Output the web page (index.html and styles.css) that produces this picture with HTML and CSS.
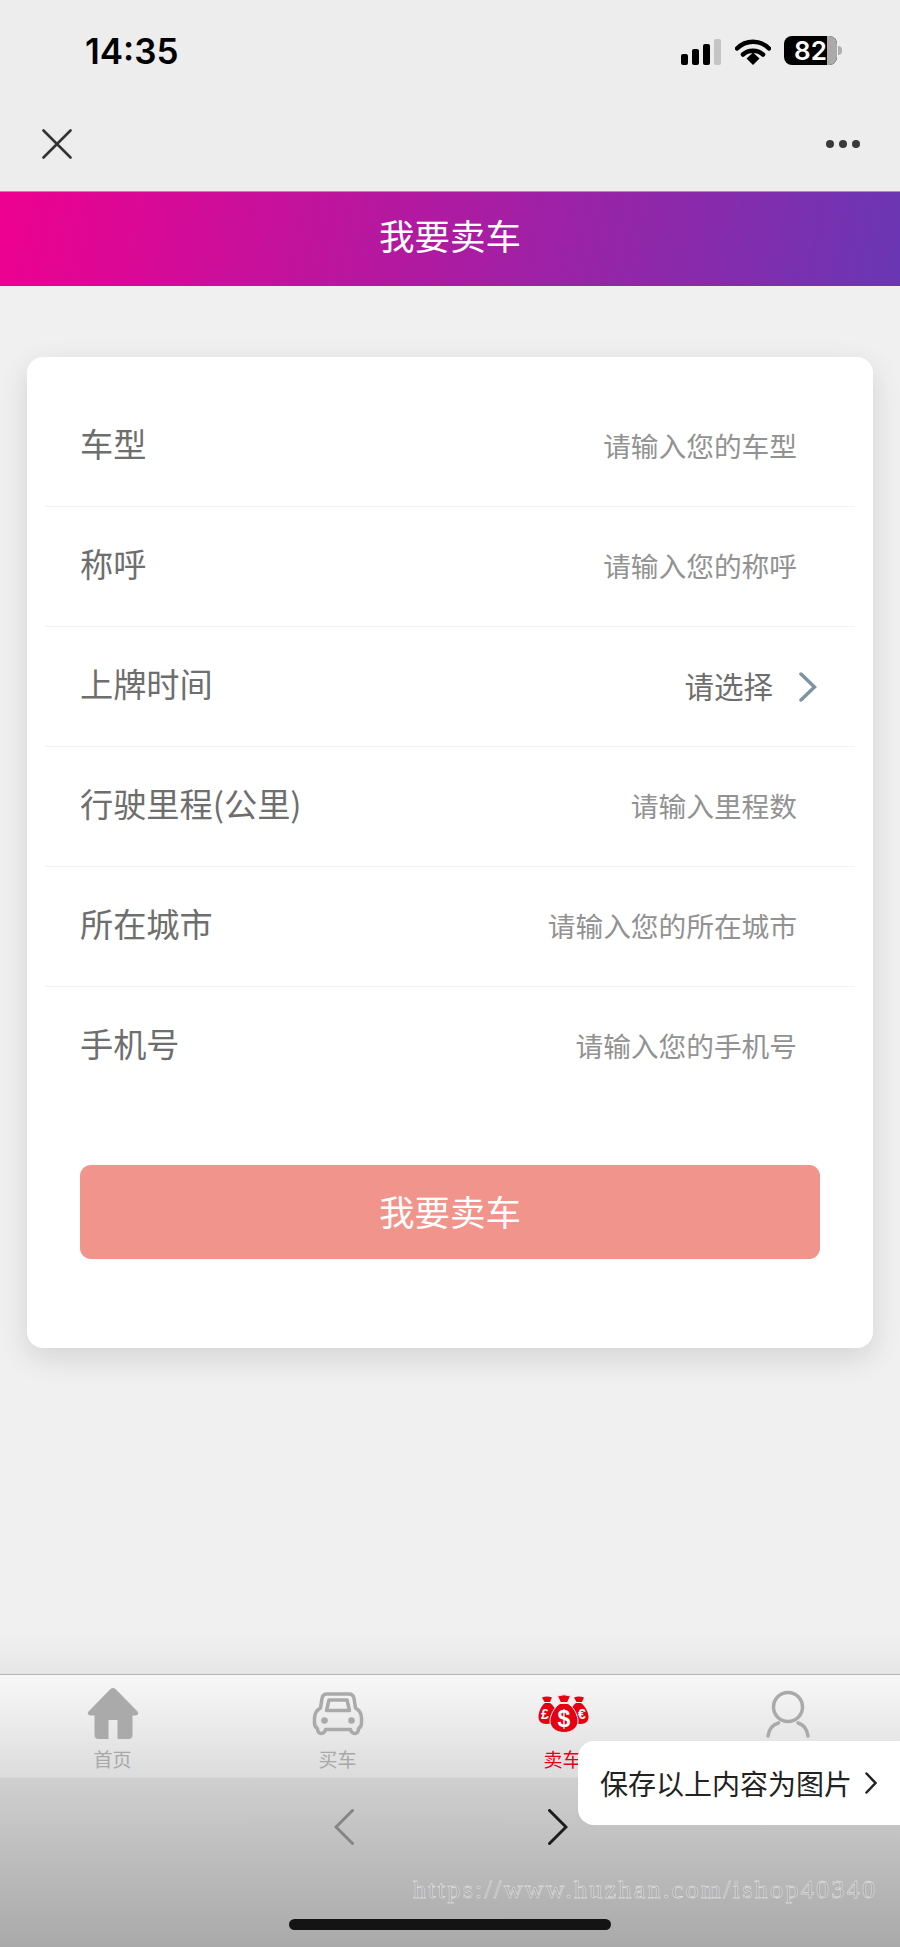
FILE: index.html
```html
<!DOCTYPE html>
<html lang="zh-CN">
<head>
    <meta charset="UTF-8">
    <meta name="viewport" content="width=device-width, initial-scale=1.0">
    <title>我要卖车</title>
    <link rel="stylesheet" href="styles.css">
</head>
<body>
    <div class="screen">
        <!-- 状态栏 -->
        <div class="status-bar">
            <span class="status-time">14:35</span>
            <div class="status-icons">
                <div class="signal">
                    <i class="bar bar1"></i><i class="bar bar2"></i><i class="bar bar3"></i><i class="bar bar4"></i>
                </div>
                <svg class="wifi" viewBox="0 0 36 27" width="36" height="27">
                    <path d="M2 10.5C11 1.5 25 1.5 34 10.5" class="wifi-arc"/>
                    <path d="M8 16.5C13.5 11.5 22.5 11.5 28 16.5" class="wifi-arc"/>
                    <path d="M11.5 20.5L18 14.5L24.5 20.5L18 27Z" class="wifi-dot"/>
                </svg>
                <div class="battery">
                    <div class="battery-body"><span class="battery-num">82</span><i class="battery-rest"></i></div>
                    <i class="battery-nub"></i>
                </div>
            </div>
        </div>

        <!-- 顶部导航 -->
        <div class="nav-bar">
            <svg viewBox="0 0 30 30" width="30" height="30" class="nav-close">
                <path d="M1.5 1.5L28.5 28.5M28.5 1.5L1.5 28.5"/>
            </svg>
            <div class="nav-more"><i></i><i></i><i></i></div>
        </div>

        <div class="page-title">我要卖车</div>

        <div class="main">
            <div class="card">
                <div class="row">
                    <span class="row-label">车型</span>
                    <span class="row-hint">请输入您的车型</span>
                </div>
                <div class="row">
                    <span class="row-label">称呼</span>
                    <span class="row-hint">请输入您的称呼</span>
                </div>
                <div class="row">
                    <span class="row-label">上牌时间</span>
                    <span class="row-pick">
                        <span class="pick-text">请选择</span>
                        <svg viewBox="0 0 18 30" width="18" height="30" class="row-arrow"><path d="M2 2L15.5 15L2 28"/></svg>
                    </span>
                </div>
                <div class="row">
                    <span class="row-label">行驶里程(公里)</span>
                    <span class="row-hint">请输入里程数</span>
                </div>
                <div class="row">
                    <span class="row-label">所在城市</span>
                    <span class="row-hint">请输入您的所在城市</span>
                </div>
                <div class="row row-last">
                    <span class="row-label">手机号</span>
                    <span class="row-hint">请输入您的手机号</span>
                </div>
                <div class="submit-btn">我要卖车</div>
            </div>
        </div>

        <!-- 底部菜单 -->
        <div class="tab-bar">
            <div class="tab">
                <svg viewBox="0 0 52 52" width="52" height="52" class="tab-icon">
                    <path class="fill-gray" d="M23.5 1L1.5 23.5C0 25.5 1 27.5 3.5 27.5H7.5V47C7.5 49.5 9 51 11.5 51H21.5V32H30.5V51H41.5C44 51 45.5 49.5 45.5 47V27.5H48.5C51 27.5 52 25.5 50.5 23.5L28.5 1C27 -0.3 25 -0.3 23.5 1Z"/>
                </svg>
                <span class="tab-text">首页</span>
            </div>
            <div class="tab">
                <svg viewBox="0 0 52 52" width="52" height="52" class="tab-icon">
                    <path class="line-gray" d="M15 6H37C40 6 41.5 7.5 42 10.5L43.5 20C47 22 49.5 25 49.5 30V35C49.5 38 48.5 39.5 46.5 40.5C46.5 43.5 45 45.5 43 45.5C40.5 45.5 39 44 38.5 41.5H13.5C13 44 11.5 45.5 9 45.5C7 45.5 5.5 43.5 5.5 40.5C3.5 39.5 2.5 38 2.5 35V30C2.5 25 5 22 8.5 20L10 10.5C10.5 7.5 12 6 15 6Z"/>
                    <path class="line-gray" d="M17 12H35L37.5 22.5H14.5Z"/>
                    <circle class="fill-gray" cx="12.5" cy="32.5" r="3.3"/>
                    <circle class="fill-gray" cx="39.5" cy="32.5" r="3.3"/>
                </svg>
                <span class="tab-text">买车</span>
            </div>
            <div class="tab">
                <svg viewBox="0 0 52 52" width="52" height="52" class="tab-icon">
                    <g class="fill-red">
                        <path d="M5 9.5Q10 7.5 15 9.5L13 14H7.5Z"/>
                        <path d="M8 15H13C17 18 21 24 21 29C21 33 16 36 9.5 36C4 36 1.5 33 1.5 29C1.5 24 4 18 8 15Z"/>
                        <path d="M37 9.5Q42 7.5 47 9.5L45 14H39.5Z"/>
                        <path d="M39 15H44C48 18 51.5 24 51.5 29C51.5 33 49 36 43.5 36C37 36 32 33 32 29C32 24 35 18 39 15Z"/>
                    </g>
                    <text x="8" y="31" class="bag-small">£</text>
                    <text x="45" y="31" class="bag-small">€</text>
                    <path class="bag-main" d="M20.5 8Q27 5.5 33.5 8L30.5 14.5H23.5Z"/>
                    <path class="bag-main" d="M23 15.5H31C36.5 19 41 27 41 33C41 40 34.5 44.5 27 44.5C19.5 44.5 13 40 13 33C13 27 17.5 19 23 15.5Z"/>
                    <text x="27" y="38.5" class="bag-dollar">$</text>
                </svg>
                <span class="tab-text tab-active">卖车</span>
            </div>
            <div class="tab">
                <svg viewBox="0 0 52 52" width="52" height="52" class="tab-icon">
                    <circle class="line-gray" cx="26" cy="19" r="14.5"/>
                    <path class="line-gray round" d="M6 48C7 41 11 36.5 16.5 35M36 35C41 36.5 45 41 46 48"/>
                </svg>
            </div>
        </div>

        <!-- 底部工具条 -->
        <div class="tool-bar">
            <div class="tool-arrows">
                <svg viewBox="0 0 20 36" width="20" height="36" class="arrow-back"><path d="M18.5 1.5L2 18L18.5 34.5"/></svg>
                <svg viewBox="0 0 20 36" width="20" height="36" class="arrow-next"><path d="M1.5 1.5L18 18L1.5 34.5"/></svg>
            </div>
            <div class="home-line"></div>
        </div>

        <!-- 浮层 -->
        <div class="save-tip">
            <span>保存以上内容为图片</span>
            <svg viewBox="0 0 12 22" width="12" height="22" class="save-arrow"><path d="M1.5 1.5L10.5 11L1.5 20.5"/></svg>
        </div>
        <div class="watermark">https://www.huzhan.com/ishop40340</div>
    </div>
</body>
</html>
```

FILE: styles.css
```css
* {
    box-sizing: border-box;
}
html, body {
    margin: 0;
    padding: 0;
}
body {
    font-family: "Noto Sans CJK SC", "Liberation Sans", sans-serif;
    background: #f0f0f0;
}
.screen {
    position: relative;
    width: 900px;
    height: 1947px;
    overflow: hidden;
    display: flex;
    flex-direction: column;
}

/* 状态栏 */
.status-bar {
    height: 96px;
    flex: none;
    background: #ededed;
    display: flex;
    justify-content: space-between;
    padding: 30px 58px 0 85px;
}
.status-time {
    font-family: Inter, "Liberation Sans", sans-serif;
    font-size: 35px;
    font-weight: 600;
    line-height: 42px;
    color: #000;
}
.status-icons {
    display: flex;
    align-items: flex-start;
    padding-top: 6px;
}
.signal {
    display: flex;
    align-items: flex-end;
    gap: 4px;
    height: 27px;
    margin-top: 2px;
}
.bar {
    display: block;
    width: 7px;
    background: #000;
    border-radius: 2px;
}
.bar1 { height: 11px; }
.bar2 { height: 16px; }
.bar3 { height: 21px; }
.bar4 { height: 26px; background: #c4c4c4; }
.wifi {
    margin: 2px 13px 0 14px;
}
.wifi-arc {
    fill: none;
    stroke: #000;
    stroke-width: 4.5;
    stroke-linecap: round;
}
.wifi-dot {
    fill: #000;
}
.battery {
    display: flex;
    align-items: center;
    height: 29px;
}
.battery-body {
    position: relative;
    width: 53px;
    height: 29px;
    border-radius: 8px;
    background: #000;
    overflow: hidden;
    padding-left: 10px;
}
.battery-num {
    font-family: Inter, "Liberation Sans", sans-serif;
    font-size: 26px;
    font-weight: 600;
    line-height: 29px;
    color: #fff;
    display: block;
}
.battery-rest {
    position: absolute;
    top: 0;
    right: 0;
    width: 10px;
    height: 100%;
    background: #aaa;
}
.battery-nub {
    display: block;
    width: 4px;
    height: 9px;
    margin-left: 1px;
    background: #b0b0b0;
    border-radius: 0 4px 4px 0;
}

/* 顶部导航 */
.nav-bar {
    height: 95px;
    flex: none;
    background: #ededed;
    display: flex;
    justify-content: space-between;
    align-items: center;
    padding: 0 40px 0 42px;
}
.nav-close path {
    fill: none;
    stroke: #333;
    stroke-width: 2.6;
    stroke-linecap: round;
}
.nav-more {
    display: flex;
    gap: 5px;
}
.nav-more i {
    display: block;
    width: 8px;
    height: 8px;
    border-radius: 50%;
    background: #3a3a3a;
}
.page-title {
    height: 95px;
    flex: none;
    background: linear-gradient(100deg, #ee0090, #6a37b4);
    border-top: 1px solid #b18aa8;
    color: #fff;
    font-size: 35.5px;
    line-height: 86px;
    text-align: center;
}

/* 表单 */
.main {
    flex: 1;
    padding: 71px 27px 0;
    background: linear-gradient(180deg, #f0f0f0 calc(100% - 40px), #e6e6e6);
}
.card {
    height: 991px;
    padding: 30px 18px 0;
    background: #fff;
    border-radius: 16px;
    box-shadow: 0 10px 30px rgba(0,0,0,0.12);
}
.row {
    height: 120px;
    display: flex;
    justify-content: space-between;
    align-items: center;
    padding: 0 38px 0 35px;
    border-bottom: 1px solid #f3f3f3;
}
.row-last {
    border-bottom: none;
}
.row-label {
    font-size: 33.2px;
    color: #6e6e6e;
    margin-bottom: 9px;
}
.row-hint {
    font-size: 27.7px;
    color: #929292;
    padding-right: 20px;
    margin-bottom: 4px;
}
.row-pick {
    display: flex;
    align-items: center;
    gap: 26px;
}
.pick-text {
    font-size: 29.5px;
    color: #6e6e6e;
    margin-bottom: 4px;
}
.row-arrow path {
    fill: none;
    stroke: #7d95a3;
    stroke-width: 3.5;
    stroke-linecap: round;
}
.submit-btn {
    height: 94px;
    margin: 58px 35px 0;
    background: #f0948c;
    border-radius: 11px;
    color: #fff;
    font-size: 35.5px;
    line-height: 92px;
    text-align: center;
}

/* 底部菜单 */
.tab-bar {
    height: 104px;
    flex: none;
    display: grid;
    grid-template-columns: repeat(4, 1fr);
    padding-top: 13px;
    background: linear-gradient(180deg, #f8f8f8, #dcdcdc);
    border-top: 1px solid #b4b4b4;
    border-bottom: 1px solid #d6d6d6;
}
.tab {
    display: flex;
    flex-direction: column;
    align-items: center;
}
.tab-icon {
    display: block;
    flex: none;
}
.tab-text {
    margin-top: 7px;
    font-size: 19px;
    line-height: 24px;
    color: #a8a8a8;
}
.tab-active {
    color: #e60012;
}
.fill-gray {
    fill: #aaa;
}
.line-gray {
    fill: none;
    stroke: #aaa;
    stroke-width: 3.5;
    stroke-linejoin: round;
}
.round {
    stroke-linecap: round;
}
.fill-red {
    fill: #e60012;
}
.bag-main {
    fill: #e60012;
    stroke: #eee;
    stroke-width: 1;
}
.bag-small, .bag-dollar {
    fill: #fff;
    font-family: "Liberation Sans", sans-serif;
    font-weight: 700;
    text-anchor: middle;
}
.bag-small {
    font-size: 14px;
}
.bag-dollar {
    font-size: 23px;
}

/* 底部工具条 */
.tool-bar {
    height: 169px;
    flex: none;
    display: flex;
    flex-direction: column;
    align-items: center;
    padding-top: 31px;
    background: linear-gradient(180deg, #cfcfcf, #a9a9a9);
}
.tool-arrows {
    display: flex;
    gap: 194px;
    margin-left: 1px;
}
.arrow-back path, .arrow-next path {
    fill: none;
    stroke-width: 3;
    stroke-linecap: round;
}
.arrow-back path {
    stroke: #858585;
}
.arrow-next path {
    stroke: #1c1c1c;
}
.home-line {
    width: 322px;
    height: 11px;
    margin-top: 74px;
    border-radius: 6px;
    background: #141414;
}

/* 浮层 */
.save-tip {
    position: absolute;
    left: 578px;
    top: 1741px;
    width: 322px;
    height: 84px;
    display: flex;
    align-items: center;
    gap: 13px;
    padding-left: 22px;
    background: #fff;
    border-radius: 16px 0 0 16px;
    font-size: 28px;
    color: #222;
}
.save-arrow path {
    fill: none;
    stroke: #222;
    stroke-width: 2.5;
    stroke-linecap: round;
}
.watermark {
    position: absolute;
    left: 413px;
    top: 1875px;
    font-family: "Liberation Serif", serif;
    font-size: 26px;
    letter-spacing: 2.3px;
    line-height: 30px;
    color: rgba(160,160,160,0.6);
    -webkit-text-stroke: 0.4px #f2f2f2;
    white-space: nowrap;
}
```
